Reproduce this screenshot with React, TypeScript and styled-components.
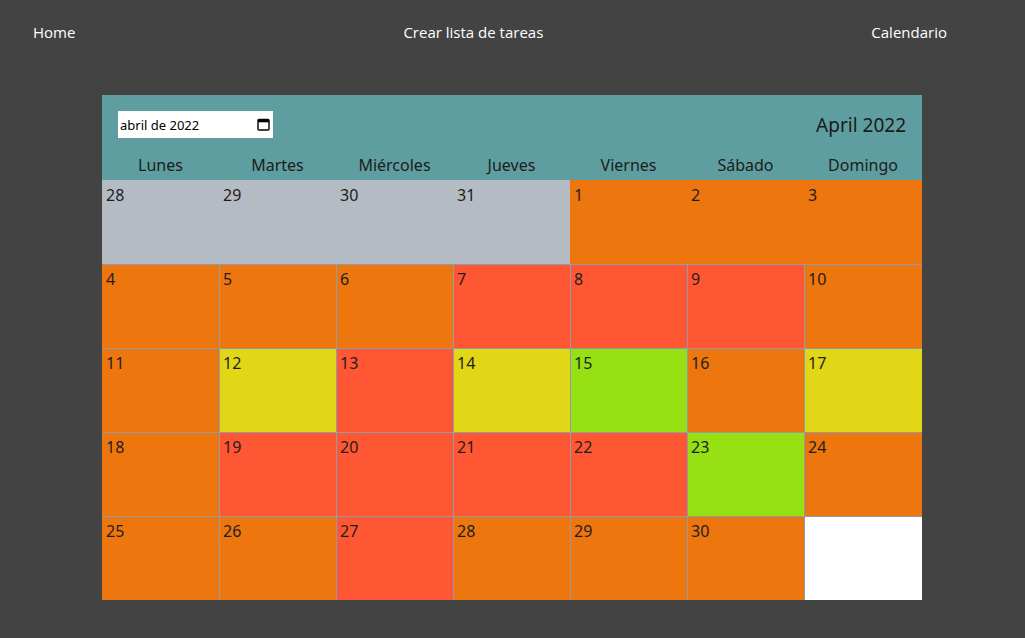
import React from "react";
import styled, { createGlobalStyle } from "styled-components";

const Global = createGlobalStyle`
  html, body { margin: 0; padding: 0; background: #434343; }
  body { font-family: "Open Sans", "Noto Sans", sans-serif; }
`;

const Nav = styled.nav`
  display: flex;
  justify-content: space-between;
  align-items: center;
  height: 64px;
  padding: 0 78px 0 33px;
`;

const NavLink = styled.a`
  color: #ffffff;
  font-size: 15px;
  text-decoration: none;
`;

const Calendar = styled.section`
  width: 820px;
  margin: 31px 0 0 102px;
`;

const Header = styled.div`
  background: #5f9ea0;
`;

const TopRow = styled.div`
  display: flex;
  justify-content: space-between;
  align-items: center;
  padding: 16px 16px 0 16px;
  height: 27px;
`;

const MonthInput = styled.div`
  width: 155px;
  height: 27px;
  background: #ffffff;
  display: flex;
  align-items: center;
  justify-content: space-between;
  box-sizing: border-box;
  padding: 0 3px 0 2px;
  font-family: "Noto Sans", "Open Sans", sans-serif;
  font-size: 13px;
  color: #000;
`;

const Title = styled.div`
  font-family: "Noto Sans", "Open Sans", sans-serif;
  font-size: 19px;
  color: #1b1b1b;
`;

const columns = "repeat(6, 117px) 118px";

const WeekDays = styled.div`
  display: grid;
  grid-template-columns: ${columns};
  height: 42px;
  align-items: center;
`;

const WeekDay = styled.div`
  text-align: center;
  font-family: "Noto Sans", "Open Sans", sans-serif;
  font-size: 16px;
  color: #1c1c1c;
  padding-top: 12px;
`;

const Grid = styled.div`
  display: grid;
  grid-template-columns: ${columns};
  grid-auto-rows: 84px;
`;

const colors: Record<string, string> = {
  g: "#b5bbc3",
  o: "#ee760f",
  r: "#ff5733",
  y: "#e1d716",
  l: "#97e014",
  w: "#ffffff",
};

const Cell = styled.div<{ $c: string; $first: boolean; $edge: boolean }>`
  background: ${(p) => colors[p.$c]};
  border-left: 1px solid ${(p) => (p.$first || p.$edge ? "transparent" : "#8e9cab")};
  border-top: 1px solid ${(p) => (p.$first ? "transparent" : "#8e9cab")};
  box-sizing: border-box;
  padding: 3px 0 0 3px;
  font-family: "Noto Sans", "Open Sans", sans-serif;
  font-size: 16px;
  line-height: 22px;
  color: #1e1e1e;
`;

const days: [string, string][] = [
  ["28", "g"], ["29", "g"], ["30", "g"], ["31", "g"], ["1", "o"], ["2", "o"], ["3", "o"],
  ["4", "o"], ["5", "o"], ["6", "o"], ["7", "r"], ["8", "r"], ["9", "r"], ["10", "o"],
  ["11", "o"], ["12", "y"], ["13", "r"], ["14", "y"], ["15", "l"], ["16", "o"], ["17", "y"],
  ["18", "o"], ["19", "r"], ["20", "r"], ["21", "r"], ["22", "r"], ["23", "l"], ["24", "o"],
  ["25", "o"], ["26", "o"], ["27", "r"], ["28", "o"], ["29", "o"], ["30", "o"], ["", "w"],
];

const names = ["Lunes", "Martes", "Miércoles", "Jueves", "Viernes", "Sábado", "Domingo"];

const CalIcon = () => (
  <svg width="13" height="13" viewBox="0 0 13 13">
    <rect x="1" y="1.5" width="11" height="10.5" rx="1" fill="none" stroke="#000" strokeWidth="1.4" />
    <rect x="1" y="1.5" width="11" height="2.8" fill="#000" />
  </svg>
);

export default function App() {
  return (
    <>
      <Global />
      <Nav>
        <NavLink>Home</NavLink>
        <NavLink>Crear lista de tareas</NavLink>
        <NavLink>Calendario</NavLink>
      </Nav>
      <Calendar>
        <Header>
          <TopRow>
            <MonthInput>
              <span>abril de 2022</span>
              <CalIcon />
            </MonthInput>
            <Title>April 2022</Title>
          </TopRow>
          <WeekDays>
            {names.map((n) => (
              <WeekDay key={n}>{n}</WeekDay>
            ))}
          </WeekDays>
        </Header>
        <Grid>
          {days.map(([d, c], i) => (
            <Cell key={i} $c={c} $first={i < 7} $edge={i % 7 === 0}>
              {d}
            </Cell>
          ))}
        </Grid>
      </Calendar>
    </>
  );
}
